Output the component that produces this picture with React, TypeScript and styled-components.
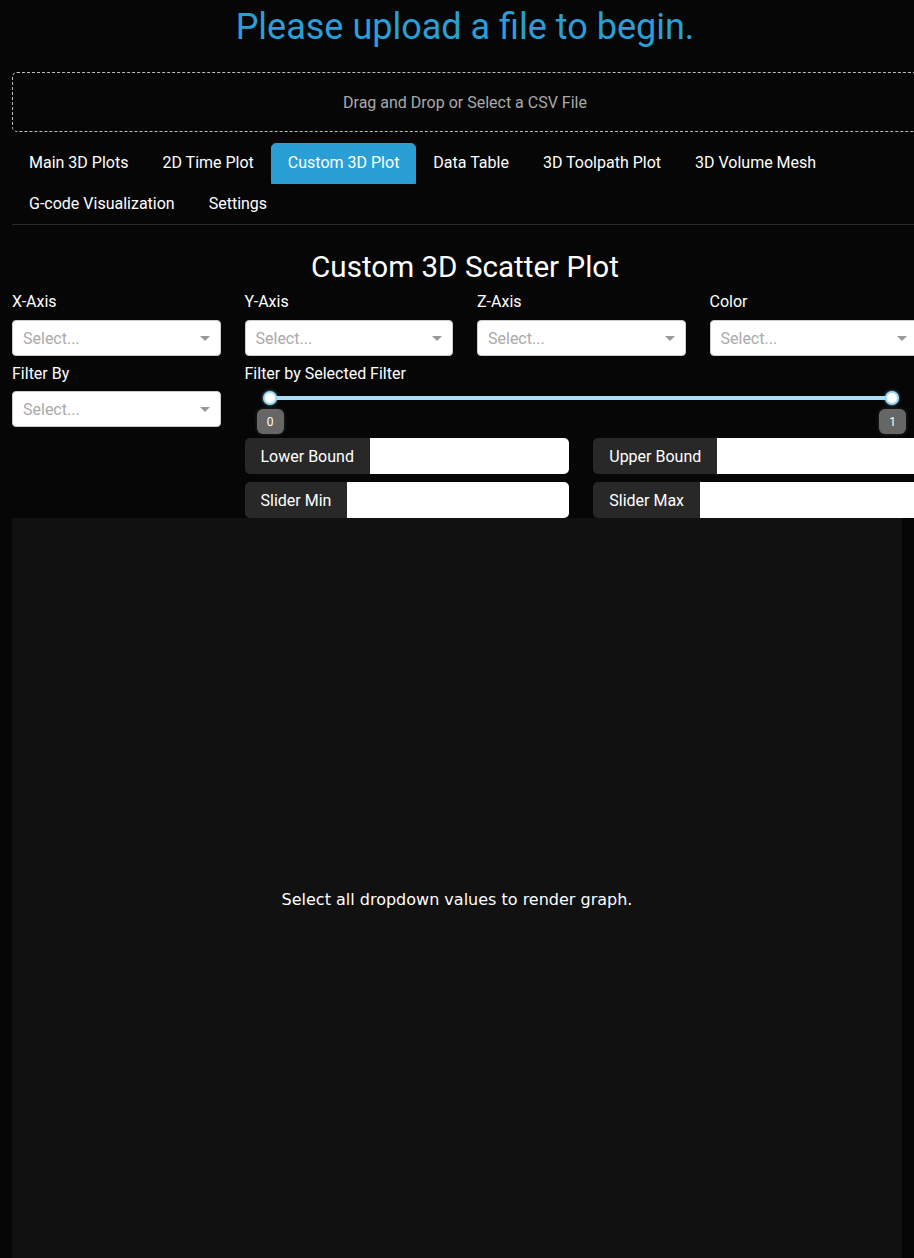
import React from "react";
import styled, { createGlobalStyle } from "styled-components";

const Global = createGlobalStyle`
  html, body { margin: 0; padding: 0; background: #060606; overflow: hidden; }
  body { font-family: Roboto, "Liberation Sans", sans-serif; color: #fff; }
  * { box-sizing: border-box; }
`;

const Page = styled.div`
  width: 930px;
  padding: 0 12px;
`;

const Title = styled.h1`
  margin: 0;
  height: 54px;
  line-height: 54px;
  text-align: center;
  font-size: 36px;
  font-weight: 400;
  color: #2a9fd6;
`;

const Upload = styled.div`
  margin-top: 18px;
  height: 60px;
  border: 1px dashed #bbb;
  border-radius: 5px;
  display: flex;
  align-items: center;
  justify-content: center;
  padding-top: 1px;
  font-size: 16px;
  color: #aaa;
`;

const Tabs = styled.nav`
  margin-top: 11px;
  display: flex;
  flex-wrap: wrap;
  border-bottom: 1px solid #2b2b2b;
`;

const Tab = styled.div<{ $active?: boolean }>`
  padding: 8px 16px;
  line-height: 22px;
  height: 40.5px;
  font-size: 16px;
  border: 1px solid ${(p) => (p.$active ? "#2a9fd6" : "transparent")};
  border-radius: 5px 5px 0 0;
  background: ${(p) => (p.$active ? "#2a9fd6" : "transparent")};
  color: #fff;
  white-space: nowrap;
`;

const Heading = styled.h3`
  margin: 24px 0 0;
  height: 36px;
  line-height: 36px;
  text-align: center;
  font-size: 29.6px;
  font-weight: 400;
`;

const Controls = styled.div`
  display: grid;
  grid-template-columns: repeat(4, 1fr);
  column-gap: 24px;
`;

const Field = styled.div<{ $span?: number }>`
  display: flex;
  flex-direction: column;
  grid-column: span ${(p) => p.$span ?? 1};
`;

const Label = styled.div<{ $gap?: number }>`
  font-size: 16px;
  line-height: 24px;
  margin-top: ${(p) => p.$gap ?? 5}px;
`;

const Dropdown = styled.div<{ $gap: number }>`
  margin-top: ${(p) => p.$gap}px;
  height: 36px;
  background: #fff;
  border: 1px solid #ccc;
  border-radius: 4px;
  display: flex;
  align-items: center;
  justify-content: space-between;
  padding: 0 10px;
  color: #aaa;
  font-size: 16px;
`;

const Arrow = styled.span`
  width: 0;
  height: 0;
  border-left: 5px solid transparent;
  border-right: 5px solid transparent;
  border-top: 5px solid #999;
`;

const SliderArea = styled.div`
  position: relative;
  height: 52px;
`;

const Track = styled.div`
  position: absolute;
  left: 25px;
  right: 26px;
  top: 10px;
  height: 4px;
  border-radius: 2px;
  background: #abdff6;
`;

const Handle = styled.div<{ $side: "left" | "right" }>`
  position: absolute;
  top: 5px;
  ${(p) => (p.$side === "left" ? "left: 18px;" : "right: 19px;")}
  width: 14px;
  height: 14px;
  border-radius: 50%;
  background: #fff;
  border: 2px solid #9fd9f3;
  box-shadow: 0 0 3px rgba(150, 215, 245, 0.8);
`;

const Tip = styled.div<{ $side: "left" | "right" }>`
  position: absolute;
  top: 23px;
  ${(p) => (p.$side === "left" ? "left: 12px;" : "right: 12px;")}
  width: 27px;
  height: 25px;
  border-radius: 6px;
  background: #666;
  box-shadow: 0 0 4px rgba(255, 255, 255, 0.15);
  color: #fff;
  font-size: 12px;
  display: flex;
  align-items: center;
  justify-content: center;
`;

const Bounds = styled.div`
  display: grid;
  grid-template-columns: 1fr 1fr;
  column-gap: 24px;
  row-gap: 8px;
`;

const Group = styled.div`
  display: flex;
  height: 36px;
`;

const GroupLabel = styled.div`
  background: #282828;
  color: #fff;
  font-size: 16px;
  padding: 0 16px;
  display: flex;
  align-items: center;
  border-radius: 5px 0 0 5px;
  white-space: nowrap;
`;

const GroupInput = styled.div`
  flex: 1;
  background: #fff;
  border-radius: 0 5px 5px 0;
`;

const Graph = styled.div`
  width: calc(100vw - 24px);
  height: 762px;
  background: #111111;
  display: flex;
  align-items: center;
  justify-content: center;
  font-family: "DejaVu Sans", Verdana, sans-serif;
  font-size: 16px;
  color: #fff;
`;

const tabs = [
  "Main 3D Plots",
  "2D Time Plot",
  "Custom 3D Plot",
  "Data Table",
  "3D Toolpath Plot",
  "3D Volume Mesh",
  "G-code Visualization",
  "Settings",
];

const Select = ({ gap = 6 }: { gap?: number }) => (
  <Dropdown $gap={gap}>
    <span>Select...</span>
    <Arrow />
  </Dropdown>
);

export default function App() {
  return (
    <>
      <Global />
      <Page>
        <Title>Please upload a file to begin.</Title>
        <Upload>Drag and Drop or Select a CSV File</Upload>
        <Tabs>
          {tabs.map((t) => (
            <Tab key={t} $active={t === "Custom 3D Plot"}>
              {t}
            </Tab>
          ))}
        </Tabs>
        <Heading>Custom 3D Scatter Plot</Heading>
        <Controls>
          {["X-Axis", "Y-Axis", "Z-Axis", "Color"].map((l) => (
            <Field key={l}>
              <Label>{l}</Label>
              <Select />
            </Field>
          ))}
          <Field>
            <Label $gap={6}>Filter By</Label>
            <Select gap={5} />
          </Field>
          <Field $span={3}>
            <Label $gap={6}>Filter by Selected Filter</Label>
            <SliderArea>
              <Track />
              <Handle $side="left" />
              <Handle $side="right" />
              <Tip $side="left">0</Tip>
              <Tip $side="right">1</Tip>
            </SliderArea>
            <Bounds>
              <Group>
                <GroupLabel>Lower Bound</GroupLabel>
                <GroupInput />
              </Group>
              <Group>
                <GroupLabel>Upper Bound</GroupLabel>
                <GroupInput />
              </Group>
              <Group>
                <GroupLabel>Slider Min</GroupLabel>
                <GroupInput />
              </Group>
              <Group>
                <GroupLabel>Slider Max</GroupLabel>
                <GroupInput />
              </Group>
            </Bounds>
          </Field>
        </Controls>
        <Graph>Select all dropdown values to render graph.</Graph>
      </Page>
    </>
  );
}
